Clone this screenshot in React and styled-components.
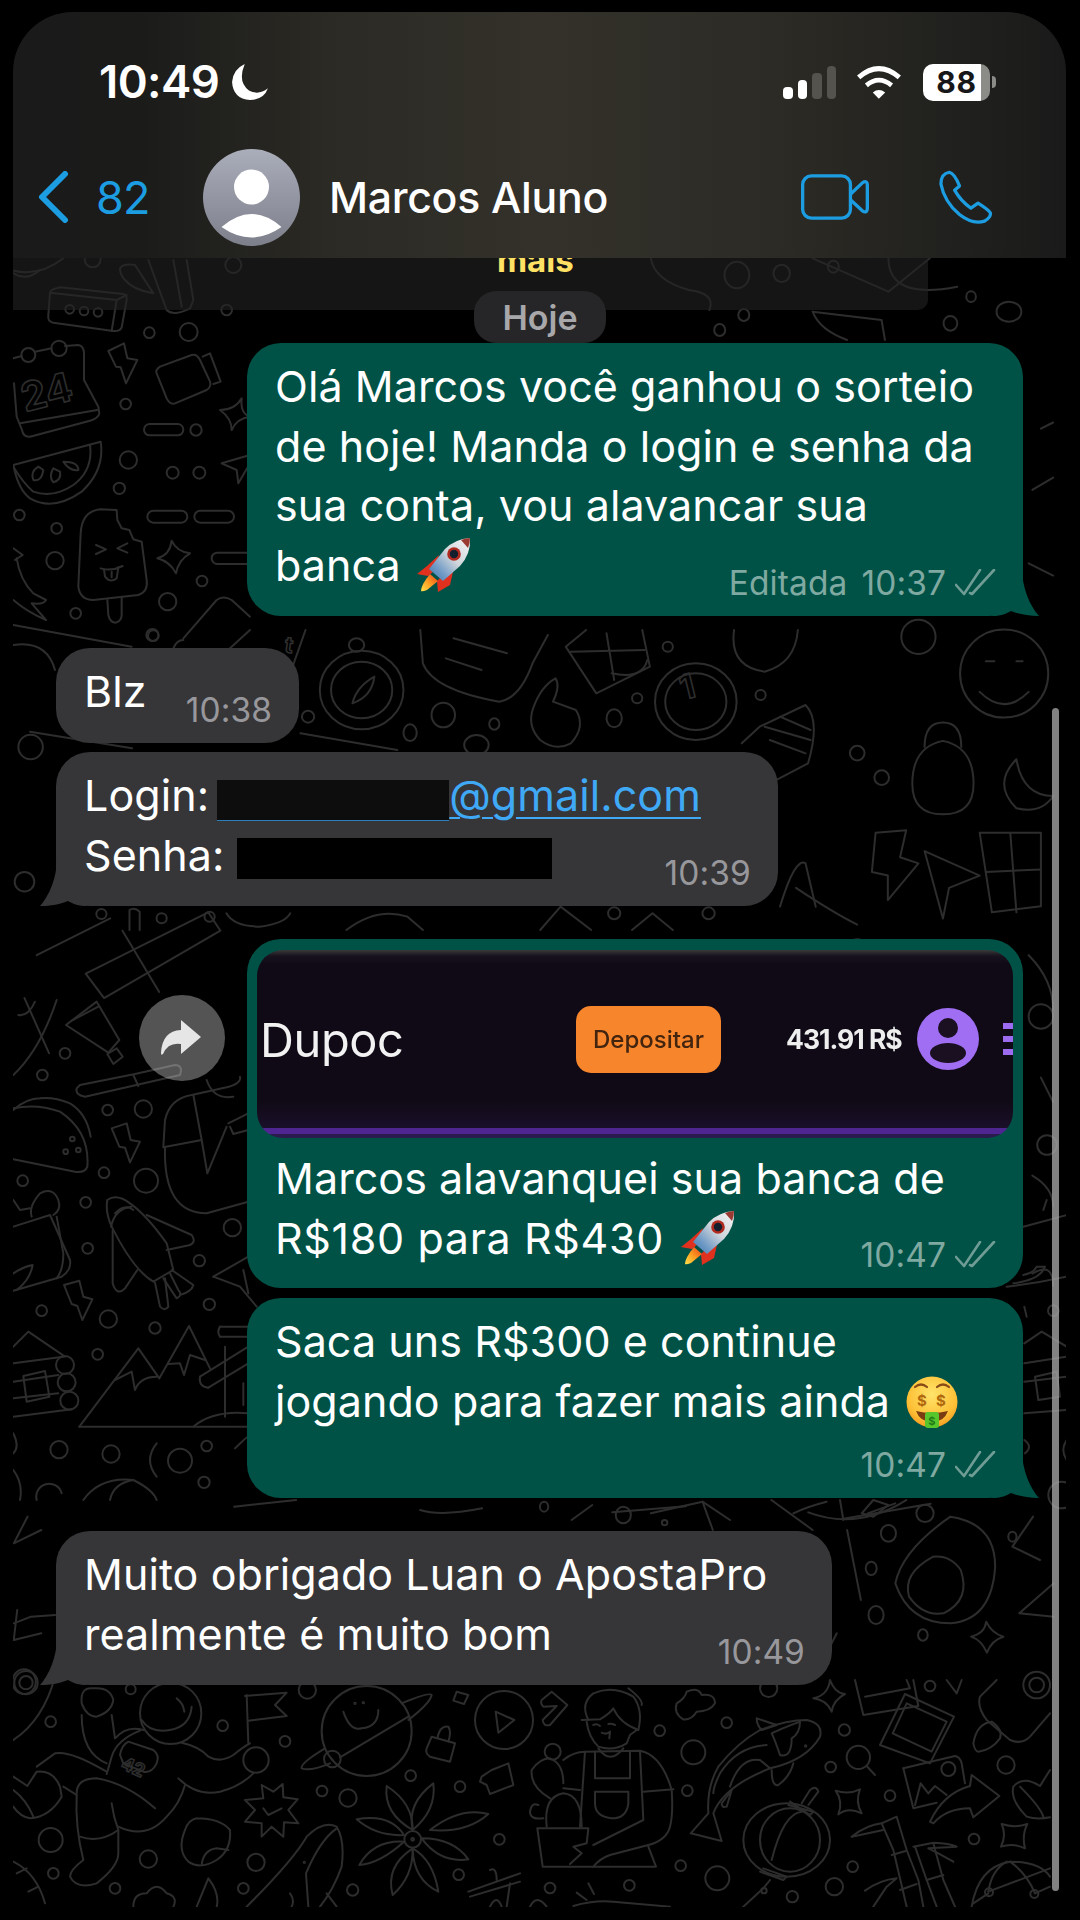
import React from 'react';
import styled, { createGlobalStyle } from 'styled-components';

const Global = createGlobalStyle`
  html, body { margin: 0; padding: 0; background: #000; }
  body { font-family: Inter, "Liberation Sans", sans-serif; color: #fff; }
  * { box-sizing: border-box; }
`;

const Phone = styled.main`
  position: relative; width: 1053px; height: 1895px; margin: 12px 14px 13px 13px;
  border-radius: 60px 60px 26px 26px; overflow: hidden; background: #000;
`;
const Wallpaper = styled.svg`
  position: absolute; inset: 0; width: 1053px; height: 1895px; fill: none;
  stroke: #2d2d2d; stroke-width: 2; stroke-linecap: round; stroke-linejoin: round;
  path, ellipse { vector-effect: non-scaling-stroke; }
  text { font-family: Inter, sans-serif; font-weight: 700; stroke-width: 1.6; }
`;
const Layer = styled.div`position: relative; display: flex; flex-direction: column;`;

const Header = styled.header`
  height: 246px; display: flex; flex-direction: column;
  background: linear-gradient(90deg,#1a1a1a 0%,#1b1b1a 12%,#2b2a24 30%,#33312a 50%,#2c2b25 72%,#1a1a1a 100%);
`;
const StatusBar = styled.div`
  margin-top: 48px; height: 44px; padding: 0 70px 0 86px; display: flex; align-items: center; flex-shrink: 0;
`;
const Clock = styled.span`font-size: 45.5px; font-weight: 600; letter-spacing: -0.6px; line-height: 44px;`;
const Moon = styled.svg`width: 38px; height: 38px; margin-left: 12px;`;
const StatusIcons = styled.div`margin-left: auto; display: flex; align-items: center;`;
const Signal = styled.div`display: flex; align-items: flex-end; gap: 5px; height: 33px; margin-right: 20px;`;
const Bar = styled.i`
  display: block; width: 9.5px; height: ${p => p.$h}px; border-radius: 4px;
  background: ${p => (p.$dim ? '#55534e' : '#fff')};
`;
const Wifi = styled.svg`width: 46px; height: 34px; margin-right: 21px;`;
const Battery = styled.div`
  width: 67px; height: 37px; border-radius: 10px; color: #17171a; font-size: 30px; font-weight: 700;
  display: flex; align-items: center; justify-content: center; letter-spacing: 0.6px;
  background: linear-gradient(90deg,#fff 0,#fff 87%,#8b8b88 87%);
`;
const Nub = styled.i`
  display: block; width: 4px; height: 12px; margin-left: 2px; background: #8b8b88; border-radius: 0 6px 6px 0;
`;

const Nav = styled.nav`
  margin-top: 43px; height: 100px; padding: 0 72px 0 25px; display: flex; align-items: center; flex-shrink: 0;
`;
const Chevron = styled.svg`width: 31px; height: 52px; margin-right: 27px;`;
const Count = styled.span`font-size: 45px; color: #1c9de2; width: 51px; margin-right: 56px; letter-spacing: -0.8px;`;
const AvatarIcon = styled.svg`width: 97px; height: 97px; margin-right: 29px; flex-shrink: 0;`;
const Name = styled.span`font-size: 42.8px; font-weight: 500; letter-spacing: -0.3px; white-space: nowrap;`;
const VideoIcon = styled.svg`width: 68px; height: 46px; margin-left: auto; margin-right: 69px;`;
const CallIcon = styled.svg`width: 56px; height: 56px;`;

const Pinned = styled.div`
  width: 915px; height: 52px; padding-left: 484px; overflow: hidden; background: rgba(34,34,34,.62);
  border-radius: 0 0 10px 0;
`;
const PinnedText = styled.span`
  display: block; font-size: 33px; font-weight: 700; color: #ffe164; line-height: 30px; margin-top: -13px;
`;
const DayPill = styled.div`
  align-self: flex-start; margin: -19px 0 0 461px; width: 132px; height: 52px; border-radius: 22px;
  background: #262628; color: #a8a8aa; font-size: 34px; font-weight: 600; display: flex; align-items: center; justify-content: center;
  position: relative;
`;

const Thread = styled.div`display: flex; flex-direction: column;`;
const Row = styled.div`
  display: flex; align-items: flex-start; justify-content: ${p => (p.$out ? 'flex-end' : 'flex-start')};
  padding: ${p => (p.$out ? '0 43px 0 0' : '0 0 0 43px')};
  margin-top: ${p => p.$gap}px;
`;
const Bubble = styled.div`
  position: relative; width: ${p => p.$w}px; min-height: ${p => p.$h}px; border-radius: 34px;
  padding: ${p => (p.$media ? '11px 0 0' : '14px 0 0')};
  background: ${p => (p.$out ? '#005246' : '#363638')};
`;
const Text = styled.div`
  padding: 0 0 0 28px; font-size: 43px; line-height: 59.5px; letter-spacing: ${p => p.$ls ?? 0.07}px; white-space: nowrap; color: #fff;
`;
const Emoji = styled.svg`
  display: inline-block; vertical-align: -11px; width: ${p => p.$s}px; height: ${p => p.$s}px; margin-left: 4px;
`;
const Meta = styled.div`
  position: absolute; right: 27px; bottom: 14px; display: flex; align-items: center; gap: 9px;
  font-size: 33.5px; line-height: 38px; letter-spacing: 0.1px; white-space: nowrap;
  color: ${p => (p.$out ? '#7fa9a1' : '#98989c')};
`;
const Stamp = styled.span`margin-right: 5px;`;
const Checks = styled.svg`width: 41px; height: 27px; fill: none; stroke: #6f9c94; stroke-width: 2.6; margin-bottom: 2px;`;
const Tail = styled.svg`
  position: absolute; bottom: 0; width: 48px; height: 48px;
  ${p => (p.$out ? 'right: -17px;' : 'left: -17px; transform: scaleX(-1);')}
  fill: ${p => (p.$out ? '#005246' : '#363638')};
`;
const Link = styled.span`color: #40a9f6; text-decoration: underline; text-decoration-thickness: 2px; text-underline-offset: 6px;`;
const Redact = styled.span`
  display: inline-block; width: ${p => p.$w}px; height: 41px; vertical-align: ${p => p.$v}px; margin-left: ${p => p.$m}px;
  background: ${p => p.$c}; ${p => p.$line ? 'border-bottom: 1px solid #2b7fbc;' : ''}
`;
const Forward = styled.div`
  width: 86px; height: 86px; border-radius: 50%; background: rgba(255,255,255,.33); margin: 56px 22px 0 0;
  display: flex; align-items: center; justify-content: center;
`;
const ForwardIcon = styled.svg`width: 44px; height: 38px;`;

const Shot = styled.div`
  position: relative; margin: 0 10px 11px; height: 188px; border-radius: 26px; overflow: hidden; filter: blur(.5px);
  background: linear-gradient(180deg,#3a3a3a 0,#17121d 6px,#0f0a15 14px,#0f0a15 150px,#1b0f2a 178px,#4f2691 178px,#4f2691 184px,#2a1a4d 184px);
  display: flex; align-items: center; padding: 0 0 10px 3px;
`;
const Brand = styled.span`font-size: 47px; font-weight: 400; color: #f2f2f2; width: 316px; letter-spacing: -.4px; display: flex;`;
const Deposit = styled.span`
  width: 145px; height: 67px; border-radius: 15px; background: #f7852c; color: #43240f; font-size: 24px; font-weight: 500;
  display: flex; align-items: center; justify-content: center; margin-right: 65px;
`;
const Balance = styled.span`font-size: 26.5px; font-weight: 700; color: #eee; width: 131px; letter-spacing: -1px; white-space: nowrap;`;
const UserDot = styled.svg`width: 62px; height: 62px; margin-right: 24px;`;
const Kebab = styled.span`display: flex; flex-direction: column; gap: 7px;`;
const KebabBar = styled.i`display: block; width: 10px; height: 6px; background: #9d6bf0;`;

const Scrollbar = styled.div`
  position: absolute; left: 1039px; top: 696px; bottom: 16px; width: 7px; border-radius: 4px;
  background: rgba(165,165,165,.78);
`;

const pill = (x1, x2, y1, y2) => {
  const r = (y2 - y1) / 2;
  return `M${x1 + r} ${y1} H${x2 - r} A${r} ${r} 0 0 1 ${x2 - r} ${y2} H${x1 + r} A${r} ${r} 0 0 1 ${x1 + r} ${y1} Z`;
};

const GROUPS = [
  { o: [10, 250], s: [3, 3],
    p: ['M120 128 Q122 118 150 112 L340 132 Q352 135 350 150 L335 232 Q330 245 310 243 L130 218 Q112 215 115 195 Z','M120 128 L320 150 L350 135','M320 150 L305 243',
      'M10 70 Q50 95 90 60','M12 62 Q90 80 160 25','M330 55 Q340 40 375 45 L430 130 Q370 120 345 90 Q330 75 330 55','M415 30 L470 180 Q490 200 540 175 L550 150 L530 30','M490 30 L515 170',
      'M10 325 L35 318','M75 305 L125 295','M165 288 L205 285 Q222 288 222 310 L222 390 L265 470 L268 490 Q265 505 240 512 L60 560 Q40 562 36 540 L20 500 L12 400','M30 520 L262 480',
      'M295 303 L342 280 L352 325 L382 330 L348 400 L332 352 L318 350 Z','M440 370 Q435 360 450 350 L545 315 Q560 310 570 330 L600 395 Q605 410 590 420 L495 460 Q480 465 470 445 Z','M578 320 L600 310 L632 395 L610 402',
      'M630 480 Q675 480 695 445 Q690 490 720 500 Q680 505 665 540 Q665 505 630 480 Z',pill(402,520,522,556),pill(412,532,782,818),pill(553,672,782,818),pill(605,760,908,942),
      'M10 645 L272 575 Q285 660 215 725 Q130 785 60 745 Q25 720 10 645 Z','M240 585 Q250 660 190 705 Q130 745 70 725 Q40 700 10 650','M85 650 Q60 665 70 690 Q95 695 100 660 Z','M130 655 Q115 680 130 697 Q155 690 150 665Z','M160 635 Q180 665 205 660 Q205 635 160 635Z',
      'M635 640 L720 615 M635 640 L680 660 L685 700 L720 640',
      'M320 780 L270 778 Q215 785 212 850 L205 1010 Q210 1050 250 1050 L385 1035 Q415 1025 410 990 L395 875 L370 868 L358 840 L335 835 L322 810 Z','M292 1050 L295 1095 Q300 1118 318 1118 Q335 1112 335 1095 L335 1040','M258 885 L288 898 L258 912','M352 880 L322 895 L352 908','M272 955 Q305 965 338 948','M282 958 L285 980 Q300 1000 320 985 L325 952','M305 965 L305 982',
      'M442 925 Q480 915 485 872 Q500 905 540 910 Q505 930 498 970 Q480 935 442 925Z','M10 895 L38 915 L15 930 M20 925 Q30 990 70 1030 L108 1050 Q100 1065 65 1060 L108 1110 Q50 1085 10 1050',
      'M10 1125 L365 1190','M520 1165 L620 1050 Q640 1035 665 1050 L720 1100','M490 1195 Q500 1170 520 1170','M660 1195 L720 1140','M10 1185 Q110 1170 135 1260'],
    c: [[179,178,13],[222,183,13],[264,187,13],[248,28,24],[670,45,24],[55,315,21],[147,295,23],[418,248,16],[536,246,27],[347,462,16],[558,540,17],[488,668,18],[568,668,18],[355,630,26],[328,715,17],[28,795,16],[140,835,16],[135,932,26],[197,1090,16],[473,1055,26],[576,993,16],[430,1157,16],[650,180,16]] },
  { o: [0, 1000], s: [3, 3],
    p: ['M198 75 L290 5 L358 120 L325 158 Z','M215 62 L295 20','M322 162 L350 145 L368 170 L340 192 Z','M55 45 Q85 50 105 5','M40 225 Q120 150 170 0','M240 255 L405 222 L525 195 Q550 195 540 225 L255 290 Q225 285 230 265 Z','M400 225 L415 258',
      'M490 440 L495 360 Q510 295 575 285 L680 262 Q725 250 720 230','M490 442 L605 420 L580 285','M605 420 L622 520 L680 380','M495 445 Q490 640 620 640 L745 605','M685 370 L745 340','M690 380 L700 402 L745 390','M620 240 Q640 300 700 290',
      'M40 325 Q110 310 180 335 Q270 395 262 500 Q255 520 225 515 L40 478','M40 330 Q80 295 120 295 Q160 290 210 310 Q260 340 272 410',
      'M335 385 L380 370 L392 420 L420 425 L390 487 L375 443 L358 440 Z','M192 855 L238 842 L250 890 L277 898 L247 960 L232 918 L215 912 Z',
      'M40 680 L150 645 L210 780 Q215 810 185 830 L40 872','M95 650 Q85 620 120 580 Q160 560 175 600 Q185 630 160 645','M170 650 L190 760 Q190 810 170 835','M40 600 L60 630 L90 625','M40 820 Q70 800 98 795 Q90 840 50 870',
      'M322 600 Q350 580 390 610 Q440 645 500 730 L520 810 L460 845 Q400 810 335 680 Q315 635 322 600','M333 680 Q345 625 395 620','M345 640 Q375 610 400 630','M440 645 L575 705 Q590 725 570 735 L500 750','M338 690 L338 850 Q350 890 375 865 L412 810','M465 848 L480 920 Q495 935 505 920 L495 835','M490 835 L530 895 Q550 885 535 870 L510 820','M515 810 L580 855 Q575 875 540 885',
      'M640 830 L745 770','M640 830 L720 860 L770 920','M730 810 L745 880','M40 1040 L85 995 L195 1070','M40 1090 L190 1070','M40 1145 L175 1125','M40 1195 L175 1180','M40 1250 L215 1228','M70 1128 L135 1113 L148 1190 L80 1205 Z',
      'M238 1280 L415 1045 L478 1135 L567 978 L630 1105','M238 1280 H745','M345 1140 L395 1115 L405 1170 Q420 1130 470 1130','M505 1092 L540 1090 L552 1125 L570 1065 L615 1080','M580 1280 Q640 1230 745 1240','M600 1130 L745 1040 M625 1163 L745 1090','M600 1130 Q595 1160 625 1163','M675 1040 V1250','M730 1150 V1215','M660 980 H745 M660 1010 H745','M660 980 Q650 995 660 1010',
      'M470 1330 Q430 1380 470 1430','M40 1300 Q60 1340 40 1360','M40 1410 Q70 1450 60 1500','M110 1500 A38 38 0 0 1 185 1480','M250 1500 Q300 1430 400 1440 Q460 1470 470 1500','M330 1500 Q340 1450 400 1440','M705 1345 Q740 1310 745 1310'],
    c: [[195,160,16],[127,225,16],[323,330,16],[430,327,26],[312,518,16],[438,542,36],[68,542,16],[257,607,16],[263,745,16],[598,782,17],[697,683,26],[125,932,16],[628,913,17],[325,957,26],[465,984,17],[293,1063,16],[177,1349,26],[333,1362,26],[540,1382,36],[612,1447,17],[620,1338,16],[217,417,7],[197,455,7],[235,450,7],[195,1095,27],[200,1147,27],[208,1202,27]] },
  { o: [0, 1660], s: [3, 3],
    p: ['M425 180 Q450 220 510 210 Q570 200 575 140','M530 115 Q550 130 553 155','M245 130 Q240 80 280 85 Q330 80 340 120 Q335 155 290 170 Q260 170 245 130','M245 165 Q245 280 320 310','M335 165 L345 235 Q380 195 430 210','M320 342 L335 290 Q350 240 420 212','M110 320 L165 280 Q210 270 320 335','M40 350 L82 378 L110 335 Q160 330 180 380 L185 410 Q150 470 90 475 Q60 470 40 440','M40 390 Q80 420 100 470','M190 380 L230 405','M230 400 Q230 355 290 355 Q380 370 465 445','M230 405 Q225 500 250 600 Q210 630 210 650 Q230 690 290 670 Q355 620 355 580 L355 510 Q340 470 335 430','M240 530 Q300 550 355 510','M355 500 Q440 540 500 470 Q540 430 555 375','M535 355 Q590 410 660 395 Q720 380 760 340','M545 248 Q600 260 625 290 Q660 310 700 285 Q730 260 750 250','M740 105 L745 250','M735 108 L860 98 L825 135 L860 168 L745 182','M360 285 Q365 255 385 245 L460 270 Q480 285 470 310 Q455 340 430 335 L370 310 Z',
      'M40 240 Q130 180 165 50','M40 605 Q110 640 135 730','M50 640 L80 625','M85 695 L115 680',
      'M735 420 L790 415 L785 375 L820 395 L848 372 L850 412 L893 418 L865 450 L895 490 L852 487 L850 530 L815 500 L785 530 L785 490 L735 485 L765 450 Z','M790 445 L805 465 L845 445','M590 475 Q660 475 690 510 Q695 570 650 600 Q600 630 565 605 Q530 570 555 510 Q565 480 590 475','M605 615 Q610 570 650 565 L685 570',
      'M740 740 Q880 600 920 530 Q970 480 1010 500 Q1035 540 1025 620 Q1000 690 960 740','M1010 505 Q960 540 918 640 L925 740','M980 700 L1010 740','M870 700 Q885 720 875 740',
      'M975 265 Q900 310 905 325 Q930 335 990 310','M1020 292 L1225 170 M1205 130 Q1290 95 1295 105 Q1290 130 1225 180','M1030 155 Q1050 215 1085 205 Q1135 200 1135 150',
      'M1370 95 L1405 105 L1392 132 L1360 122 Z','M1487 155 L1543 180 L1495 218 Z','M1295 230 L1365 250 L1350 305 L1290 290 Q1275 280 1280 265 Z','M1312 235 Q1320 195 1345 200 Q1355 215 1345 245','M1445 350 L1475 330 L1525 310 L1540 375 L1470 402 L1460 375 L1440 365 Z',
      'M1238 510 Q1150 460 1160 378 Q1240 430 1238 510','M1238 510 Q1220 430 1300 370 Q1310 450 1238 510','M1290 510 Q1380 440 1465 462 Q1400 520 1290 510','M1265 535 Q1360 535 1405 598 Q1320 610 1265 535','M1238 565 Q1300 600 1315 695 Q1240 660 1238 565','M1238 565 Q1240 650 1178 705 Q1155 620 1238 565','M1212 545 Q1140 610 1078 615 Q1120 540 1212 545','M1212 525 Q1130 530 1070 478 Q1170 460 1212 525',
      'M1405 695 L1560 640','M1410 710 L1560 665','M1470 630 Q1490 620 1490 660','M1530 670 L1520 740','M1470 740 Q1490 700 1505 740',
      'M400 740 Q400 700 440 700 Q470 660 500 700 Q535 710 520 740','M590 740 L625 655 Q660 700 650 740'],
    c: [[512,160,92],[768,300,38],[152,185,16],[392,88,15],[668,197,16],[855,244,16],[922,90,26],[152,540,36],[160,640,16],[345,685,16],[445,597,26],[768,607,26],[730,685,16],[1058,690,17],[966,393,16],[1044,414,26],[1232,347,16],[1380,380,16],[1498,538,16],[1376,644,16],[78,68,35],[78,68,20],[1100,213,135],[997,297,25],[1238,538,25],[1238,538,4],[1512,180,87],[913,607,2],[1065,130,2],[1090,128,2]] },
  { o: [530, 1680], s: [3, 3],
    p: ['M35 60 L65 35 L112 75 L60 135 Q40 140 38 120 L80 78 L40 80 Q30 70 35 60','M175 120 Q150 70 190 40 Q250 15 310 50 Q340 90 325 150','M155 120 L210 118 Q240 100 250 85 Q270 130 325 150','M170 125 Q175 170 205 200 Q250 215 290 190 L300 165 L320 150','M295 25 Q340 60 335 75','M190 135 Q200 130 210 138','M235 132 Q245 130 255 135','M215 158 Q230 165 240 155 L238 175',
      'M165 215 L150 440','M330 215 L340 420 L190 495','M195 215 V295 H300 V215','M195 335 H295 V370 Q290 415 245 415 Q195 410 195 370 Z','M205 205 Q240 255 280 205','M100 240 Q130 215 165 215 L330 212 Q395 225 425 330 Q430 400 420 440 Q410 480 355 495 L240 525 Q210 535 190 560','M340 335 L430 328','M100 325 L150 330','M355 500 L378 560 H38 L22 445 H175 L170 490 L130 500 L155 520 L120 552','M60 355 Q0 320 5 270 Q30 235 60 235 Q100 250 100 310','M50 440 Q40 350 100 340 Q155 345 155 440','M25 375 Q5 365 0 395 Q0 420 40 415',
      'M460 118 Q430 100 440 70 Q465 55 470 35 Q505 20 515 45 Q555 40 555 70 Q540 95 500 95 Q485 120 460 118','M850 55 Q895 45 900 0 Q915 40 945 42 Q910 60 905 95 Q890 60 850 55 Z',
      'M975 0 L1000 105 L1165 78 L1150 0','M1005 50 L1140 25 L1130 0','M1125 42 L1272 110 L1200 250 L1050 195 Z','M1130 70 L1250 125 L1205 215 L1088 160 Z','M1120 265 L1275 228 Q1290 230 1295 250 L1305 310','M1120 265 L1150 385 L1220 368','M1155 375 L1172 310 L1195 340 L1215 318 L1250 345',
      'M1200 425 Q1240 340 1320 318 L1325 285 L1408 348 L1330 412 L1320 385 Q1250 385 1210 430 Z','M1250 0 L1280 40 L1295 0','M1400 0 L1350 50 Q1340 80 1370 120 L1440 180 Q1475 195 1500 170 L1560 100','M1385 125 Q1340 130 1330 190 Q1335 215 1345 215 Q1385 210 1410 175 Q1420 150 1385 125',
      'M690 150 Q620 190 565 260 Q530 320 535 400 L482 460 L575 483 L550 400 Q580 320 720 265 Q830 240 870 170 Q880 130 830 120 Q770 120 690 150','M680 115 L740 135 L695 150 Q680 135 680 115','M810 125 Q810 160 785 175 Q785 235 750 225 Q735 180 725 160 Q745 150 810 125','M710 195 Q620 200 570 280 Q550 320 550 340','M575 370 L605 330 L590 380 Q575 385 575 370','M600 320 Q630 230 690 240 L720 265','M725 270 Q725 320 745 315 Q780 290 790 250',
      'M640 480 A130 110 0 1 0 900 480 A130 110 0 1 0 640 480','M690 480 A90 95 0 1 0 870 480 A90 95 0 1 0 690 480','M725 540 Q760 400 815 395','M775 375 L850 395 L840 405 L780 365','M815 370 L840 330 Q860 315 865 335 L835 375','M700 565 L770 590 L760 600 L690 575','M720 600 L700 625 L640 680',
      'M917 332 Q955 345 990 328 Q975 365 995 400 Q955 380 925 403 Q940 365 917 332Z','M1415 432 Q1455 445 1492 432 Q1475 465 1485 505 Q1450 488 1413 500 Q1430 465 1415 432Z','M1010 258 L1035 285',
      'M965 470 Q1010 435 1055 430 L1100 410 L1130 510 L1165 600 L1180 680','M1055 430 L1090 510 L1130 680','M965 470 L1060 450','M1085 525 L1130 512','M1150 500 L1210 488 Q1260 490 1280 500 L1195 505 L1225 520 L1270 545','M1155 500 L1190 600 L1220 680','M1210 490 L1240 600 L1275 680','M1190 600 L1240 585','M1005 632 Q1050 600 1100 595 L1070 620 L1030 680','M1110 630 L1160 612',
      'M1325 680 Q1345 560 1440 545 Q1530 545 1560 590','M1375 635 L1560 565','M1375 635 Q1385 570 1430 545','M1440 545 Q1490 580 1515 640','M1330 670 L1375 640','M1515 640 L1560 620','M1560 270 L1530 318 Q1480 285 1450 320 Q1440 360 1490 410 Q1520 420 1560 412','M1470 320 Q1530 380 1540 410',
      'M130 678 Q190 660 250 665 L420 680','M140 638 L170 660','M175 610 L192 642','M0 680 Q20 640 50 680'],
    c: [[716,25,26],[389,152,16],[590,128,16],[490,217,36],[472,332,16],[943,150,17],[902,261,16],[1080,347,16],[1200,18,16],[1428,255,26],[1332,477,16],[452,557,16],[562,595,36],[968,560,16],[913,620,26],[787,650,17],[60,624,16],[298,616,16],[68,215,24],[1255,267,21],[985,232,35],[1520,15,40],[1520,15,22],[1377,637,12],[1513,642,12],[702,632,8],[827,198,2]] },
  { o: [30, 630], s: [1.96, 3],
    p: ['M675 140 Q640 170 632 220 Q670 200 675 140','M765 0 L770 100 Q790 180 920 215 Q960 205 985 100 L1015 15','M830 25 L935 70','M815 85 L885 120','M1090 0 L1050 50 L1110 190 L1215 110 L1200 0','M1060 65 L1205 60 M1130 10 L1145 150','M1140 130 Q1200 150 1210 90','M1380 0 Q1370 110 1440 125 Q1500 100 1505 0','M985 240 Q1000 170 1030 145 Q1040 170 1025 215 L1070 240 Q1090 290 1060 340 Q1030 365 1000 330 Q975 290 985 240','M1395 340 L1430 290 L1520 225 Q1550 270 1525 400 L1450 460','M1440 290 L1530 330 M1470 260 L1530 300 M1450 330 L1520 370','M530 310 L720 360','M0 305 L200 355','M540 0 L510 130','M195 900 V840 Q205 830 215 845 V900','M385 850 Q400 890 450 890 Q500 880 510 850','M620 900 Q680 830 740 860 L770 900','M1000 900 L1040 830 L1100 900','M1180 900 L1220 850 L1260 900','M1470 830 Q1500 680 1520 700 L1540 830'],
    e: [[650,180,82,118],[650,180,60,85],[640,45,15,20],[1305,215,80,115],[1305,215,60,85],[240,15,12,18],[545,260,12,18],[745,308,13,25],[810,255,23,37],[910,282,10,17],[1190,205,10,15],[1145,265,15,27],[1250,50,10,15],[1432,195,10,15],[875,345,24,30],[140,852,10,15],[258,865,10,15],[352,860,10,15],[1330,850,12,18],[1145,850,12,18]] },
  { o: [0, 1500], s: [1.452, 3],
    p: ['M1380 50 Q1310 150 1300 250 Q1320 370 1380 370 Q1440 360 1445 200 Q1445 70 1380 50','M1355 170 Q1310 220 1320 290 Q1340 350 1370 340 Q1410 300 1395 210 Q1380 165 1355 170','M1500 50 L1470 140 L1510 180 M1530 250 L1480 340 L1530 350','M1410 410 Q1430 400 1432 365 Q1440 400 1457 410 Q1440 420 1433 458 Q1425 420 1410 410Z','M340 20 L430 0','M610 30 Q640 50 700 25','M830 60 L860 15','M945 40 L1020 5 L1060 60','M1020 5 L1035 90','M20 370 L45 350 L80 345','M1215 400 L1205 440','M1230 90 L1250 300','M1120 0 L1180 90','M40 50 L20 130 L60 90','M25 330 L20 420 L60 400','M1260 40 L1300 10'],
    e: [[1265,205,8,20],[1272,345,11,27],[1340,405,7,17],[1290,100,11,25],[1470,110,6,15],[35,545,17,37],[790,20,6,15],[905,45,11,25],[965,68,4,8]] },
  { o: [780, 1200], s: [3, 3],
    p: ['M733 430 L785 395 L860 440','M733 490 L860 470','M733 545 L860 530','M733 640 L860 630','M765 530 L830 515 L840 590 L775 600 Z','M680 260 Q770 250 860 230','M730 80 L860 45','M800 0 L790 30','M700 250 Q780 240 795 200 L770 200 Q760 220 730 225','M245 940 L280 900 L325 915 L280 950 Z','M733 720 Q760 740 735 760','M860 720 Q840 750 860 780','M740 350 L733 320','M190 960 L180 900','M40 940 Q80 920 140 905'],
    c: [[820,332,16],[435,940,26],[845,885,40]] },
  { o: [0, 0], s: [0.8166, 0.8166],
    p: ['M745 640 Q745 610 770 605 Q795 610 795 640 Q795 665 770 665 Q745 665 745 640','M755 610 Q755 590 770 590 Q785 590 785 610','M715 680 L740 678 L735 700 L750 705 L725 735 L725 715 L712 712Z','M755 695 L800 715 L775 725 L770 750Z','M800 680 L850 680 L850 740 L810 745 Z','M825 680 L830 745','M805 712 L850 710','M830 620 Q810 640 830 660 Q850 665 860 650 Q835 650 830 620','M805 540 L812 540 M830 540 L835 540','M800 565 Q820 585 840 565','M850 350 L860 345','M840 460 L860 470','M843 400 L860 390','M650 725 Q680 745 700 755','M840 780 Q860 800 860 825','M850 880 L860 900','M843 960 Q860 970 860 985','M843 1040 Q860 1030 860 1050','M30 780 L90 750','M70 795 L170 745 L180 760 L85 815 Z','M20 815 L40 860','M100 760 L130 810','M690 1240 L760 1228','M660 1235 Q700 1250 740 1225','M500 1235 L560 1230'],
    c: [[820,550,36],[700,615,6],[720,635,6],[850,830,10],[855,935,8],[20,720,8],[25,610,10],[750,520,14],[700,775,8]] },
  { o: [0, 0], s: [1.452, 3],
    p: ['M945 775 Q950 840 1000 870 Q1040 880 1030 930','M1180 775 L1290 875 L1350 775','M1290 775 Q1290 900 1390 860','M1180 935 L1280 960 L1285 1020','M1180 935 Q1190 990 1230 1020'],
    e: [[1070,825,18,40],[1045,990,8,18],[1080,945,8,18],[1135,820,12,26],[1210,800,8,18],[1410,890,7,16],[1380,970,10,22],[1465,935,18,30]] },
];

const TEXTS = [
  { x: 25, y: 412, s: 40, r: -14, t: '24' },
  { x: 120, y: 1768, s: 18, r: 24, t: '42' },
  { x: 683, y: 700, s: 34, r: -14, t: '1' },
  { x: 284, y: 652, s: 22, r: 8, t: 't' },
];

const Doodles = () => (
  <Wallpaper viewBox="13 12 1053 1895" aria-hidden="true">
    {GROUPS.map((g, i) => (
      <g key={i} transform={`translate(${g.o[0]} ${g.o[1]}) scale(${1 / g.s[0]} ${1 / g.s[1]})`}>
        {g.p.map((d, j) => <path key={j} d={d} />)}
        {(g.c || []).map(([x, y, r], j) => <ellipse key={j} cx={x} cy={y} rx={r} ry={r} />)}
        {(g.e || []).map(([x, y, rx, ry], j) => <ellipse key={j} cx={x} cy={y} rx={rx} ry={ry} />)}
      </g>
    ))}
    {TEXTS.map((t, i) => (
      <text key={i} transform={`translate(${t.x} ${t.y}) rotate(${t.r})`} fontSize={t.s}>{t.t}</text>
    ))}
  </Wallpaper>
);

const Rocket = ({ size = 54 }) => (
  <Emoji $s={size} viewBox="0 0 54 54">
    <defs>
      <linearGradient id="rkBody" x1="1" y1="0" x2="0" y2="1"><stop offset="0" stopColor="#f7f7f7" /><stop offset=".45" stopColor="#cfd5da" /><stop offset=".75" stopColor="#6f9ac6" /><stop offset="1" stopColor="#3c76ad" /></linearGradient>
      <linearGradient id="rkFlame" x1="1" y1="0" x2="0" y2="1"><stop offset="0" stopColor="#ef3f18" /><stop offset=".5" stopColor="#fb9a21" /><stop offset="1" stopColor="#ffe14a" /></linearGradient>
    </defs>
    <path d="M10 28 L22 17 L17 33 L11 38 L0 36 Z M27 36 L38 25 L33 47 L21 54 L20 43 Z" fill="#e0301e" />
    <path d="M13 36 L21 43 L10 52 Q5 54 4 53 Q4 47 13 36 Z" fill="url(#rkFlame)" />
    <path d="M53 0 Q54 16 43 28 L26 43 L12 31 L28 11 Q38 1 53 0 Z" fill="url(#rkBody)" />
    <path d="M53 0 Q49 0 44 2 L51 10 Q53 5 53 0 Z" fill="#9a3a32" />
    <ellipse cx="37" cy="16" rx="6.8" ry="6.8" fill="#b02a20" />
    <ellipse cx="37" cy="16" rx="4.2" ry="4.2" fill="#141f2d" />
  </Emoji>
);

const MoneyFace = () => (
  <Emoji $s={52} viewBox="0 0 52 52">
    <defs>
      <radialGradient id="face" cx=".5" cy=".35" r=".7"><stop offset="0" stopColor="#ffe46b" /><stop offset=".7" stopColor="#fdbf35" /><stop offset="1" stopColor="#f2921e" /></radialGradient>
    </defs>
    <circle cx="26" cy="26" r="25.5" fill="url(#face)" />
    <path d="M9 11 Q15 6 21 11 M31 11 Q37 6 43 11" fill="none" stroke="#8a4a16" strokeWidth="2.2" strokeLinecap="round" />
    <text x="16" y="30" fontSize="15" fontWeight="700" textAnchor="middle" fill="#b0680f" fontFamily="Inter, sans-serif">$</text>
    <text x="35" y="30" fontSize="15" fontWeight="700" textAnchor="middle" fill="#b0680f" fontFamily="Inter, sans-serif">$</text>
    <path d="M10 35 Q26 39 42 35 Q38 46 26 46 Q14 46 10 35 Z" fill="#7b3b12" />
    <rect x="19" y="36" width="14" height="16" rx="3" fill="#57c62c" />
    <text x="26" y="49" fontSize="11" fontWeight="700" textAnchor="middle" fill="#1f7a18" fontFamily="Inter, sans-serif">$</text>
  </Emoji>
);

const Ticks = () => (
  <Checks viewBox="0 0 41 27">
    <path d="M1 16 L9 25 L25 1 M15 24 L17 25 L39 1" strokeLinecap="round" strokeLinejoin="round" />
  </Checks>
);

const BubbleTail = ({ out }) => (
  <Tail $out={out} viewBox="0 0 48 48">
    <path d="M30 0 C30 20 38 38 47 48 C36 48 26 46 19 43 C14 46 8 48 0 48 Z" />
  </Tail>
);

export default function App() {
  return (
    <>
      <Global />
      <Phone>
        <Doodles />
        <Layer>
          <Header>
            <StatusBar>
              <Clock>10:49</Clock>
              <Moon viewBox="0 0 36 36"><path d="M13 1 Q6 18 17 26 Q26 31 35 24 Q31 35 18 35 Q2 34 1 18 Q2 6 13 1 Z" fill="#fff" /></Moon>
              <StatusIcons>
                <Signal>
                  <Bar $h={12} /><Bar $h={19} /><Bar $h={26} $dim /><Bar $h={33} $dim />
                </Signal>
                <Wifi viewBox="0 0 137 100">
                  <path d="M8 36 Q68 -16 129 36" fill="none" stroke="#fff" strokeWidth="15" />
                  <path d="M31 60 Q68 29 106 60" fill="none" stroke="#fff" strokeWidth="14" />
                  <path d="M50 81 Q68 67 87 81 L68 100 Z" fill="#fff" />
                </Wifi>
                <Battery>88</Battery>
                <Nub />
              </StatusIcons>
            </StatusBar>
            <Nav>
              <Chevron viewBox="0 0 31 52"><path d="M27 3 L4 26 L27 49" fill="none" stroke="#1c9de2" strokeWidth="6" strokeLinecap="round" strokeLinejoin="round" /></Chevron>
              <Count>82</Count>
              <AvatarIcon viewBox="0 0 97 97">
                <defs>
                  <linearGradient id="av" x1="0" y1="0" x2="0" y2="1"><stop offset="0" stopColor="#aaadba" /><stop offset="1" stopColor="#7d808b" /></linearGradient>
                  <clipPath id="avc"><circle cx="48.5" cy="48.5" r="48.5" /></clipPath>
                </defs>
                <circle cx="48.5" cy="48.5" r="48.5" fill="url(#av)" />
                <circle cx="48.5" cy="38" r="17.5" fill="#fff" />
                <path d="M18.5 78 Q48.5 52 78.5 78 Q48.5 99 18.5 78 Z" fill="#fff" clipPath="url(#avc)" />
              </AvatarIcon>
              <Name>Marcos Aluno</Name>
              <VideoIcon viewBox="93 368 205 137" fill="none" stroke="#1c9de2" strokeWidth="10" strokeLinejoin="round">
                <rect x="98" y="373" width="144" height="127" rx="26" />
                <path d="M242 428 L278 394 Q293 384 293 402 V468 Q293 488 278 478 L242 445" />
              </VideoIcon>
              <CallIcon viewBox="500 350 170 172" fill="none" stroke="#1c9de2" strokeWidth="10" strokeLinejoin="round">
                <path d="M534 360 Q508 364 508 396 Q518 450 565 490 Q606 522 642 510 Q662 498 660 485 Q655 476 622 455 L600 470 Q570 450 550 415 L565 402 Q550 364 534 360 Z" />
              </CallIcon>
            </Nav>
          </Header>
          <Pinned><PinnedText>mais</PinnedText></Pinned>
          <DayPill>Hoje</DayPill>
          <Thread>
            <Row $out $gap={0}>
              <Bubble $out $w={776} $h={273}>
                <Text>Olá Marcos você ganhou o sorteio</Text>
                <Text>de hoje! Manda o login e senha da</Text>
                <Text>sua conta, vou alavancar sua</Text>
                <Text>banca <Rocket /></Text>
                <Meta $out><Stamp>Editada</Stamp>10:37<Ticks /></Meta>
                <BubbleTail out />
              </Bubble>
            </Row>
            <Row $gap={32}>
              <Bubble $w={243} $h={95}>
                <Text>Blz</Text>
                <Meta>10:38</Meta>
              </Bubble>
            </Row>
            <Row $gap={9}>
              <Bubble $w={722} $h={154}>
                <Text>Login: <Redact $w={232} $m={-4} $v={-10} $c="#0d0d0d" $line /><Link>@gmail.com</Link></Text>
                <Text>Senha: <Redact $w={315} $m={0} $v={-8} $c="#000" /></Text>
                <Meta>10:39</Meta>
                <BubbleTail />
              </Bubble>
            </Row>
            <Row $out $gap={33}>
              <Forward>
                <ForwardIcon viewBox="0 0 44 38">
                  <path d="M1 34 Q2 12 21 11 L21 1 L41 18 L21 35 L21 25 Q8 23 3 35 Q1 37 1 34 Z" fill="#e6e6e6" />
                </ForwardIcon>
              </Forward>
              <Bubble $out $media $w={776} $h={349}>
                <Shot>
                  <Brand>Dupoc</Brand>
                  <Deposit>Depositar</Deposit>
                  <Balance>431.91 R$</Balance>
                  <UserDot viewBox="0 0 62 62">
                    <circle cx="31" cy="31" r="31" fill="#a06ef2" />
                    <circle cx="31" cy="20" r="10" fill="#1a1022" />
                    <ellipse cx="31" cy="45" rx="18" ry="10" fill="#1a1022" />
                  </UserDot>
                  <Kebab><KebabBar /><KebabBar /><KebabBar /></Kebab>
                </Shot>
                <Text>Marcos alavanquei sua banca de</Text>
                <Text $ls={0.65}>R$180 para R$430 <Rocket /></Text>
                <Meta $out>10:47<Ticks /></Meta>
              </Bubble>
            </Row>
            <Row $out $gap={10}>
              <Bubble $out $w={776} $h={200}>
                <Text>Saca uns R$300 e continue</Text>
                <Text>jogando para fazer mais ainda <MoneyFace /></Text>
                <Meta $out>10:47<Ticks /></Meta>
                <BubbleTail out />
              </Bubble>
            </Row>
            <Row $gap={33}>
              <Bubble $w={776} $h={154}>
                <Text>Muito obrigado Luan o ApostaPro</Text>
                <Text>realmente é muito bom</Text>
                <Meta>10:49</Meta>
                <BubbleTail />
              </Bubble>
            </Row>
          </Thread>
        </Layer>
        <Scrollbar />
      </Phone>
    </>
  );
}
